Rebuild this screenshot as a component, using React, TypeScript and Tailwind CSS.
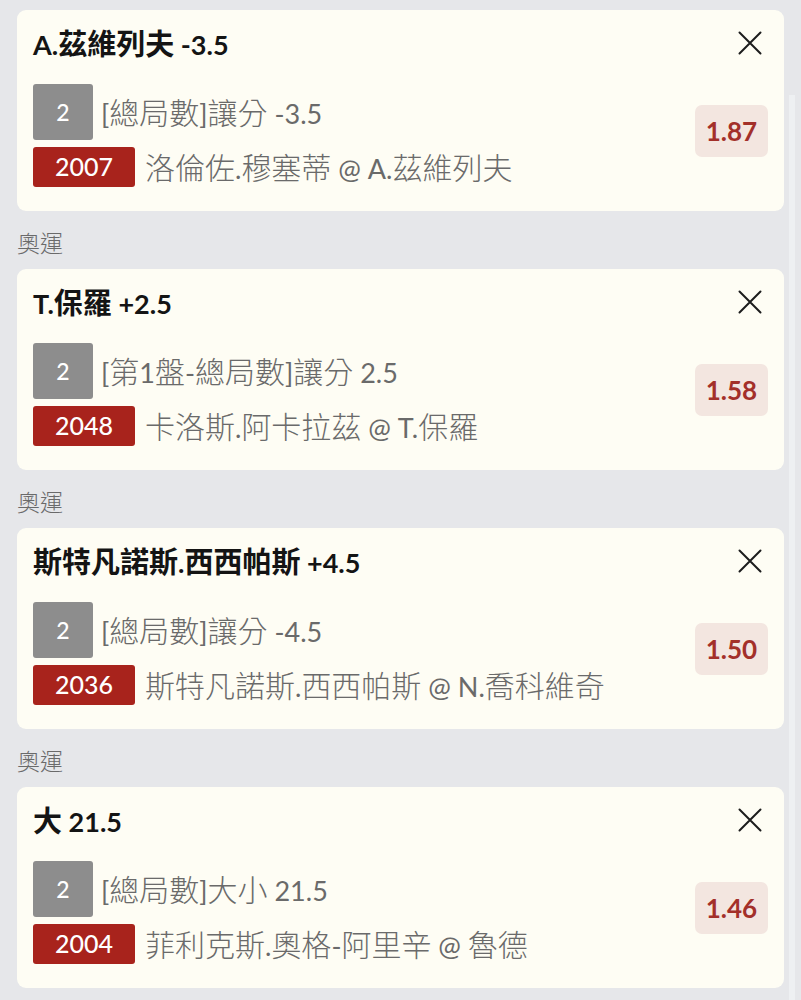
import React from "react";

interface Bet {
  league?: string;
  title: string;
  market: string;
  code: string;
  match: string;
  odds: string;
}

const bets: Bet[] = [
  { title: "A.茲維列夫 -3.5", market: "[總局數]讓分 -3.5", code: "2007", match: "洛倫佐.穆塞蒂 @ A.茲維列夫", odds: "1.87" },
  { league: "奧運", title: "T.保羅 +2.5", market: "[第1盤-總局數]讓分 2.5", code: "2048", match: "卡洛斯.阿卡拉茲 @ T.保羅", odds: "1.58" },
  { league: "奧運", title: "斯特凡諾斯.西西帕斯 +4.5", market: "[總局數]讓分 -4.5", code: "2036", match: "斯特凡諾斯.西西帕斯 @ N.喬科維奇", odds: "1.50" },
  { league: "奧運", title: "大 21.5", market: "[總局數]大小 21.5", code: "2004", match: "菲利克斯.奧格-阿里辛 @ 魯德", odds: "1.46" },
];

// CJK glyphs in the design run a bit bigger than the latin ones
const Mixed = ({ text, cjk }: { text: string; cjk: string }) => (
  <>
    {text.split(/([\u3000-\u9fff\uff00-\uffef]+)/).map((part, i) =>
      i % 2 === 1 ? (
        <span key={i} className={cjk}>
          {part}
        </span>
      ) : (
        <span key={i}>{part}</span>
      )
    )}
  </>
);

const CloseIcon = () => (
  <svg width="24" height="24" viewBox="0 0 24 24" fill="none" stroke="#1c1c1c" strokeWidth="2" strokeLinecap="round">
    <path d="M1.5 1.5 22.5 22.5M22.5 1.5 1.5 22.5" />
  </svg>
);

const BetCard = ({ bet }: { bet: Bet }) => (
  <div className="bg-[#fefdf4] rounded-[9px] pt-4 pb-6 pl-4 pr-4">
    <div className="flex items-center justify-between h-[34px]">
      <div className="text-[27px] font-bold text-[#141414] leading-none whitespace-nowrap">
        <Mixed text={bet.title} cjk="text-[29px]" />
      </div>
      <div className="mr-[6px]">
        <CloseIcon />
      </div>
    </div>
    <div className="flex items-start justify-between mt-6">
      <div className="flex flex-col gap-[7px]">
        <div className="flex items-center gap-2">
          <div className="w-[60px] h-[56px] rounded-[3px] bg-[#8d8d8d] text-white text-[23px] font-medium flex items-center justify-center">
            2
          </div>
          <div className="text-[27px] text-[#6a6a6a] leading-none whitespace-nowrap">
            <Mixed text={bet.market} cjk="text-[30px] font-light" />
          </div>
        </div>
        <div className="flex items-center gap-[10px]">
          <div className="w-[102px] h-[40px] rounded-[3px] bg-[#a8231c] text-white text-[25px] font-medium flex items-center justify-center">
            {bet.code}
          </div>
          <div className="text-[27px] text-[#6a6a6a] leading-none whitespace-nowrap">
            <Mixed text={bet.match} cjk="text-[30px] font-light" />
          </div>
        </div>
      </div>
      <div className="mt-[21px] w-[73px] h-[52px] rounded-[7px] bg-[#f3e6e0] text-[#a3302a] text-[26px] font-bold flex items-center justify-center">
        {bet.odds}
      </div>
    </div>
  </div>
);

export default function App() {
  return (
    <div
      className="min-h-screen bg-[#e6e7ea] flex"
      style={{ fontFamily: "Lato, 'Noto Sans CJK TC', sans-serif" }}
    >
      <div className="ml-[17px] w-[767px] pt-[10px]">
        {bets.map((bet, i) => (
          <div key={i}>
            {bet.league && (
              <div className="h-[58px] pt-[6px] flex items-center text-[23px] font-light text-[#6a6a6a]">{bet.league}</div>
            )}
            <BetCard bet={bet} />
          </div>
        ))}
      </div>
      <div className="ml-[5px] mt-[95px] w-[6px] bg-[#eef0f2]" />
    </div>
  );
}
